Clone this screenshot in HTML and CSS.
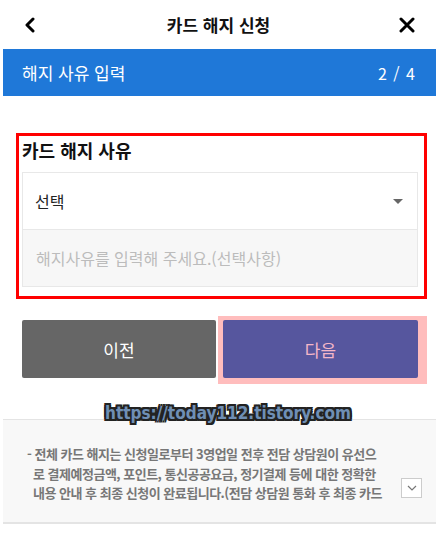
FILE: index.html
```html
<!doctype html>
<html lang="ko">
    <head>
        <meta charset="UTF-8" />
        <meta name="viewport" content="width=device-width, initial-scale=1.0" />
        <title>카드 해지 신청</title>
        <link rel="stylesheet" href="styles.css">
    </head>
    <body>
        <header class="topbar">
            <a class="icon-btn back" href="#" aria-label="뒤로">
                <svg width="12" height="16" viewBox="0 0 12 16">
                    <path d="M9 2 L3 8 L9 14" fill="none" stroke="#000" stroke-width="3" stroke-linecap="round" stroke-linejoin="round" />
                </svg>
            </a>
            <h1>카드 해지 신청</h1>
            <a class="icon-btn close" href="#" aria-label="닫기">
                <svg width="16" height="16" viewBox="0 0 16 16">
                    <path d="M2 2 L14 14 M14 2 L2 14" fill="none" stroke="#000" stroke-width="3" stroke-linecap="round" />
                </svg>
            </a>
        </header>

        <div class="step-bar">
            <span>해지 사유 입력</span>
            <span class="step-count">2 / 4</span>
        </div>

        <section class="reason-box">
            <h2>카드 해지 사유</h2>
            <div class="field">
                <div class="select-row">
                    <span>선택</span>
                    <span class="caret"></span>
                </div>
                <div class="textarea">해지사유를 입력해 주세요.(선택사항)</div>
            </div>
        </section>

        <div class="buttons">
            <button class="btn prev">이전</button>
            <div class="next-wrap">
                <button class="btn next">다음</button>
            </div>
        </div>

        <div class="notice">
            <div class="watermark">https://today112.tistory.com</div>
            <div class="notice-body">
                <p>
                    <span class="line first">- 전체 카드 해지는 신청일로부터 3영업일 전후 전담 상담원이 유선으</span>
                    <span class="line">로 결제예정금액, 포인트, 통신공공요금, 정기결제 등에 대한 정확한</span>
                    <span class="line">내용 안내 후 최종 신청이 완료됩니다.(전담 상담원 통화 후 최종 카드</span>
                </p>
                <span class="more">
                    <svg width="10" height="6" viewBox="0 0 10 6">
                        <path d="M1 1 L5 5 L9 1" fill="none" stroke="#777" stroke-width="1.2" />
                    </svg>
                </span>
            </div>
        </div>
    </body>
</html>
```

FILE: styles.css
```css
body {
    margin: 0;
    padding: 0;
    background-color: #fff;
    font-family: "Noto Sans CJK KR", "Noto Sans", sans-serif;
    color: #111;
    width: 438px;
}

.topbar {
    height: 49px;
    display: flex;
    align-items: center;
    justify-content: space-between;
    padding: 0 22px 0 21px;
    box-sizing: border-box;
}

.topbar h1 {
    margin: 0;
    font-size: 17px;
    font-weight: bold;
}

.icon-btn {
    display: flex;
    width: 18px;
    justify-content: center;
}

.step-bar {
    margin: 0 2px 0 3px;
    height: 47px;
    background-color: #1f78d8;
    color: #fff;
    font-size: 17px;
    display: flex;
    align-items: center;
    justify-content: space-between;
    padding: 0 20px 0 19px;
}

.step-count {
    font-size: 16px;
    letter-spacing: 1px;
}

.reason-box {
    margin: 37px 11px 0 16px;
    border: 3px solid #f00;
    padding: 2px 6px 9px 3px;
}

.reason-box h2 {
    margin: 0 0 10px 0;
    font-size: 18px;
    font-weight: bold;
    line-height: 24px;
}

.field {
    border: 1px solid #e8e8e8;
}

.select-row {
    height: 56px;
    display: flex;
    align-items: center;
    justify-content: space-between;
    padding: 0 14px 0 12px;
    font-size: 16px;
    color: #222;
    border-bottom: 1px solid #e8e8e8;
}

.caret {
    width: 0;
    height: 0;
    border-left: 5px solid transparent;
    border-right: 5px solid transparent;
    border-top: 5px solid #666;
}

.textarea {
    height: 56px;
    background-color: #f7f7f7;
    color: #bcbcbc;
    font-size: 16px;
    display: flex;
    align-items: center;
    padding-left: 13px;
}

.buttons {
    display: flex;
    gap: 2px;
    margin: 17px 11px 0 22px;
}

.btn {
    font-family: inherit;
    font-size: 17px;
    border: none;
    border-radius: 2px;
    height: 58px;
    cursor: pointer;
}

.prev {
    width: 194px;
    margin-top: 4px;
    background-color: #666;
    color: #fff;
}

.next-wrap {
    background-color: #ffbdbd;
    padding: 4px 9px 6px 5px;
}

.next {
    width: 195px;
    display: block;
    background-color: #56569e;
    color: #f4b6c8;
}

.notice {
    position: relative;
    margin: 35px 2px 0 3px;
    background-color: #f8f8f8;
    border-top: 1px solid #e4e4e4;
    border-bottom: 2px solid #e4e4e4;
    height: 102px;
}

.notice-body {
    display: flex;
    align-items: flex-start;
    padding: 24px 0 0 24px;
}

.notice-body p {
    margin: 0;
    flex: none;
    width: 352px;
    font-size: 13px;
    font-weight: bold;
    line-height: 19.5px;
    color: #777;
    letter-spacing: -0.5px;
}

.notice-body .line {
    display: block;
    white-space: nowrap;
    padding-left: 6px;
}

.notice-body .line.first {
    padding-left: 0;
}

.more {
    margin: 34px 0 0 22px;
    width: 19px;
    height: 18px;
    border: 1px solid #ccc;
    background-color: #fff;
    display: flex;
    align-items: center;
    justify-content: center;
}

.watermark {
    position: absolute;
    top: -17px;
    left: 102px;
    font-family: "DejaVu Sans Condensed", "DejaVu Sans", sans-serif;
    font-stretch: condensed;
    font-weight: bold;
    font-size: 17px;
    color: #6f8fb5;
    text-shadow: -2px -2px 0 #222, 2px -2px 0 #222, -2px 2px 0 #222, 2px 2px 0 #222, 0 -2px 0 #222, 0 2px 0 #222, -2px 0 0 #222, 2px 0 0 #222;
}
```
